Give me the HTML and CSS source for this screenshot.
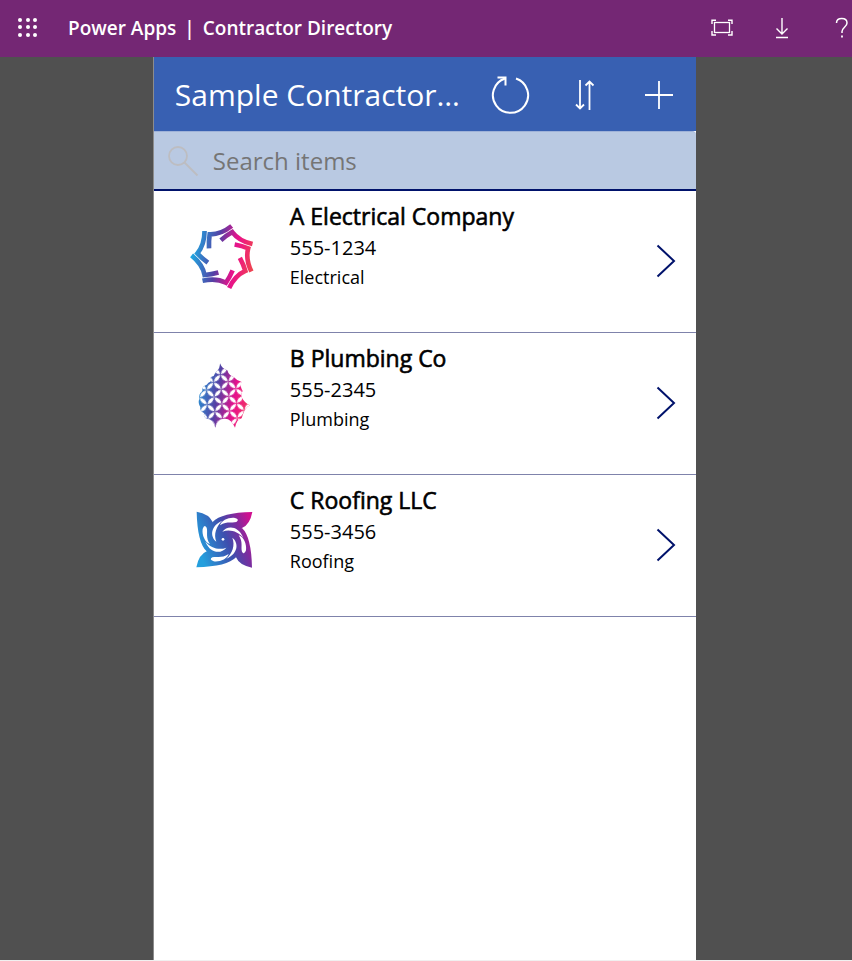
FILE: index.html
```html
<!DOCTYPE html>
<html lang="en">
<head>
  <meta charset="UTF-8">
  <title>Contractor Directory - Power Apps</title>
  <link rel="stylesheet" href="styles.css">
</head>
<body>

  <header class="topbar">
    <button class="icon-btn waffle" type="button" aria-label="App launcher">
      <svg width="22" height="22" viewBox="0 0 22 22" fill="#fff">
        <circle cx="3" cy="3" r="2"/><circle cx="11" cy="3" r="2"/><circle cx="18" cy="3" r="2"/>
        <circle cx="3" cy="10" r="2"/><circle cx="11" cy="10" r="2"/><circle cx="18" cy="10" r="2"/>
        <circle cx="3" cy="18" r="2"/><circle cx="11" cy="18" r="2"/><circle cx="18" cy="18" r="2"/>
      </svg>
    </button>
    <div class="brand">
      <a href="#">Power Apps</a>
      <span>|</span>
      <span>Contractor Directory</span>
    </div>
    <div class="top-actions">
      <button class="icon-btn" type="button" aria-label="Fit to page">
        <svg width="22" height="18" viewBox="0 0 22 18" fill="none" stroke="#fff">
          <rect x="3.5" y="3.5" width="15" height="10" stroke-width="1.3"/>
          <path d="M1 5V1.2H5 M17 1.2H21V5 M21 12V16H17 M5 16H1V12" stroke-width="1.4"/>
        </svg>
      </button>
      <button class="icon-btn" type="button" aria-label="Download">
        <svg width="14" height="22" viewBox="0 0 14 22" fill="none" stroke="#fff" stroke-width="1.4">
          <path d="M7 1V17 M1.5 11.5L7 17L12.5 11.5 M1 20.5H13"/>
        </svg>
      </button>
      <button class="icon-btn" type="button" aria-label="Help">
        <svg width="14" height="22" viewBox="0 0 14 22" fill="none" stroke="#fff" stroke-width="1.5">
          <path d="M1.5 6C1.5 3 4 1.5 6.8 1.5C10 1.5 12 3.3 12 6C12 10 7 10.5 7 14.5V16"/>
          <path d="M7 18.5V20.5" stroke-width="1.8"/>
        </svg>
      </button>
    </div>
  </header>

  <main class="stage">
    <section class="app">
      <div class="app-header">
        <h1>Sample Contractor…</h1>
        <button class="icon-btn" type="button" aria-label="Refresh">
          <svg width="40" height="40" viewBox="0 0 40 40" fill="none" stroke="#fff" stroke-width="2">
            <path d="M25 3.5A17.6 17.6 0 1 1 14 3.5"/>
            <path d="M6.5 2.5H14.5V10.5"/>
          </svg>
        </button>
        <button class="icon-btn" type="button" aria-label="Sort">
          <svg width="20" height="32" viewBox="0 0 20 32" fill="none" stroke="#fff" stroke-width="1.8">
            <path d="M5 1V29.5 M1 25.5L5 29.5L9 25.5 M14.5 31V2.5 M10.5 6.5L14.5 2.5L18.5 6.5"/>
          </svg>
        </button>
        <button class="icon-btn" type="button" aria-label="New item">
          <svg width="28" height="28" viewBox="0 0 28 28" stroke="#fff" stroke-width="1.8">
            <path d="M14 0V28 M0 14H28"/>
          </svg>
        </button>
      </div>

      <div class="search">
        <label for="search" aria-label="Search items">
          <svg width="32" height="32" viewBox="0 0 32 32" fill="none" stroke="#bdbdc1" stroke-width="1.8">
            <circle cx="11" cy="11" r="9"/>
            <path d="M17.5 17.5L30.5 30.5"/>
          </svg>
        </label>
        <input id="search" type="text" placeholder="Search items">
      </div>

      <ul class="gallery">
        <li>
          <svg class="logo" viewBox="0 0 270 255">
            <defs>
              <linearGradient id="grad" gradientUnits="userSpaceOnUse" x1="36" y1="115" x2="220" y2="145">
                <stop offset="0" stop-color="#1fa6e0"/>
                <stop offset="0.4" stop-color="#5440a4"/>
                <stop offset="0.68" stop-color="#e5128c"/>
                <stop offset="0.8" stop-color="#ee1f79"/>
                <stop offset="1" stop-color="#ee4550"/>
              </linearGradient>
              <path id="hook" d="M87 103Q86 80 89 61Q122 62 155 36" fill="none" stroke="#fff" stroke-width="14"/>
              <mask id="ring" maskUnits="userSpaceOnUse" x="0" y="0" width="270" height="255">
                <use href="#hook"/>
                <use href="#hook" transform="rotate(51.43 130 128)"/>
                <use href="#hook" transform="rotate(102.86 130 128)"/>
                <use href="#hook" transform="rotate(154.29 130 128)"/>
                <use href="#hook" transform="rotate(205.71 130 128)"/>
                <use href="#hook" transform="rotate(257.14 130 128)"/>
                <use href="#hook" transform="rotate(308.57 130 128)"/>
              </mask>
            </defs>
            <rect width="270" height="255" fill="url(#grad)" mask="url(#ring)"/>
          </svg>
          <div class="info">
            <h2>A Electrical Company</h2>
            <p class="phone">555-1234</p>
            <p class="trade">Electrical</p>
          </div>
          <button class="icon-btn" type="button" aria-label="Open A Electrical Company">
            <svg width="20" height="34" viewBox="0 0 20 34" fill="none" stroke="#00126b" stroke-width="2">
              <path d="M1.5 1.5L18 17L1.5 32.5"/>
            </svg>
          </button>
        </li>
        <li>
          <svg class="logo" viewBox="0 0 270 255">
            <defs>
              <!-- slanted grid of petals, cut out of the drop -->
              <pattern id="petals" width="20" height="20" patternUnits="userSpaceOnUse" patternTransform="matrix(1.15 1.05 -1.05 1.15 120.5 34)">
                <g fill="#fff">
                  <path d="M-9 10Q0 3 9 10Q0 17 -9 10Z"/>
                  <path d="M11 10Q20 3 29 10Q20 17 11 10Z"/>
                  <path d="M10 -9Q3 0 10 9Q17 0 10 -9Z"/>
                  <path d="M10 11Q3 20 10 29Q17 20 10 11Z"/>
                </g>
              </pattern>
              <path id="drop" d="M120 22Q126 38 142 43Q146 58 162 64Q169 73 184 77Q180 92 188 105Q181 115 186 125Q194 141 210 148Q194 154 185 187Q170 190 165 215Q153 187 134 188Q112 188 106 215Q99 188 79 188Q70 182 72 171Q59 166 61 153Q53 140 58 128Q55 115 67 105Q65 90 80 86Q85 78 91 77Q86 63 101 60Q105 49 111 45Q120 36 120 22Z"/>
            </defs>
            <use href="#drop" fill="url(#grad)"/>
            <use href="#drop" fill="url(#petals)"/>
          </svg>
          <div class="info">
            <h2>B Plumbing Co</h2>
            <p class="phone">555-2345</p>
            <p class="trade">Plumbing</p>
          </div>
          <button class="icon-btn" type="button" aria-label="Open B Plumbing Co">
            <svg width="20" height="34" viewBox="0 0 20 34" fill="none" stroke="#00126b" stroke-width="2">
              <path d="M1.5 1.5L18 17L1.5 32.5"/>
            </svg>
          </button>
        </li>
        <li>
          <svg class="logo" viewBox="0 0 270 255">
            <defs>
              <linearGradient id="grad-wheel" gradientUnits="userSpaceOnUse" x1="55" y1="150" x2="220" y2="90">
                <stop offset="0" stop-color="#249fdd"/>
                <stop offset="0.5" stop-color="#3d4fae"/>
                <stop offset="0.75" stop-color="#7a2d9f"/>
                <stop offset="1" stop-color="#cf1090"/>
              </linearGradient>
              <path id="blade" d="M132 125L98 72Q124 44 217 42Q210 80 186 90Z" fill="#fff"/>
              <g id="cuts" fill="#000">
                <path d="M120 82C124 67 148 57 165 60Q180 65 169 72C155 76 140 68 120 82Z"/>
                <path d="M127 101C142 82 174 82 190 119C174 101 150 92 127 101Z"/>
              </g>
              <mask id="wheel" maskUnits="userSpaceOnUse" x="0" y="0" width="270" height="255">
                <circle cx="133" cy="125" r="62" fill="#fff"/>
                <use href="#blade"/>
                <use href="#blade" transform="rotate(90 133 125)"/>
                <use href="#blade" transform="rotate(180 133 125)"/>
                <use href="#blade" transform="rotate(270 133 125)"/>
                <use href="#cuts"/>
                <use href="#cuts" transform="rotate(90 133 125)"/>
                <use href="#cuts" transform="rotate(180 133 125)"/>
                <use href="#cuts" transform="rotate(270 133 125)"/>
                <circle cx="129" cy="124" r="4" fill="#000"/>
              </mask>
            </defs>
            <rect width="270" height="255" fill="url(#grad-wheel)" mask="url(#wheel)"/>
          </svg>
          <div class="info">
            <h2>C Roofing LLC</h2>
            <p class="phone">555-3456</p>
            <p class="trade">Roofing</p>
          </div>
          <button class="icon-btn" type="button" aria-label="Open C Roofing LLC">
            <svg width="20" height="34" viewBox="0 0 20 34" fill="none" stroke="#00126b" stroke-width="2">
              <path d="M1.5 1.5L18 17L1.5 32.5"/>
            </svg>
          </button>
        </li>
      </ul>
    </section>
  </main>

</body>
</html>
```
FILE: styles.css
```css
:root {
  --purple: #742774;
  --blue: #3860b2;
  --light-blue: #b9c9e2;
  --navy: #00126b;
  --gray: #505050;
}

* {
  box-sizing: border-box;
}

body {
  margin: 0;
  min-height: 100vh;
  display: flex;
  flex-direction: column;
  font-family: "Open Sans", "Noto Sans", sans-serif;
  color: #000;
  background: #f0f0f0;
}

h1, h2, p, ul {
  margin: 0;
  padding: 0;
  font-weight: 400;
}

.icon-btn {
  display: flex;
  justify-content: center;
  padding: 0;
  border: none;
  background: none;
  cursor: pointer;
}

.icon-btn svg {
  flex: none;
}

/* Top bar */
.topbar {
  display: flex;
  align-items: center;
  height: 57px;
  padding: 0 0 2px 17px;
  background: var(--purple);
  color: #fff;
}

.brand {
  display: flex;
  gap: 8px;
  margin-left: 29px;
  font-size: 19px;
  font-weight: 600;
  line-height: 28px;
}

.brand a {
  color: inherit;
  text-decoration: none;
}

.top-actions {
  display: flex;
  align-items: center;
  gap: 40px;
  margin-left: auto;
}

.top-actions .icon-btn {
  width: 20px;
}

/* App canvas */
.stage {
  flex: 1;
  display: flex;
  justify-content: center;
  margin-bottom: 1px;
  padding-right: 3px;
  background: var(--gray);
}

.app {
  width: 64%;
  border-left: 1px solid #8c8c8c;
  background: #fff;
}

.app-header {
  display: flex;
  align-items: center;
  gap: 34px;
  height: 74px;
  padding: 1px 17px 0 21px;
  background: var(--blue);
  color: #fff;
}

.app-header h1 {
  flex: 1;
  min-width: 0;
  font-size: 30px;
  line-height: 40px;
  white-space: nowrap;
}

.app-header .icon-btn {
  width: 40px;
}

.search {
  display: flex;
  align-items: center;
  gap: 14px;
  height: 60px;
  padding-left: 13px;
  background: var(--light-blue);
  border-top: 1px solid #9fb2d8;
  border-bottom: 2px solid var(--navy);
  border-radius: 0 4px 0 0;
}

.search label {
  display: flex;
}

.search input {
  flex: 1;
  min-width: 0;
  padding: 0;
  border: none;
  outline: none;
  background: none;
  font: 24px/32px "Open Sans", "Noto Sans", sans-serif;
}

.search input::placeholder {
  color: #757575;
}

/* Contractor list */
.gallery {
  list-style: none;
}

.gallery li {
  display: flex;
  align-items: center;
  height: 142px;
  padding: 0 20px 2px 26px;
  border-bottom: 1px solid #7f83ab;
}

.logo {
  width: 90px;
  height: 85px;
  margin-bottom: 8px;
}

.info {
  flex: 1;
  align-self: flex-start;
  padding: 9px 0 0 20px;
}

/* medium weight, between regular and semibold */
.info h2 {
  font-size: 23px;
  line-height: 32px;
  -webkit-text-stroke: 0.6px #000;
}

.phone {
  font-size: 20px;
  line-height: 32px;
}

.trade {
  font-size: 18px;
  line-height: 26px;
}
```
